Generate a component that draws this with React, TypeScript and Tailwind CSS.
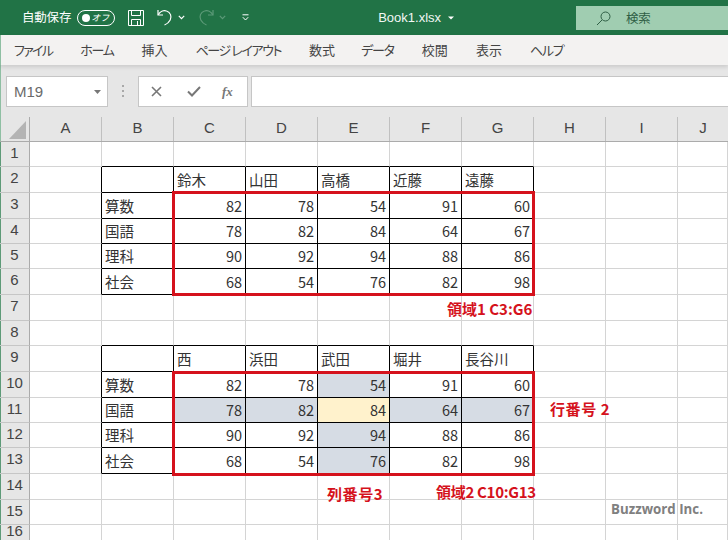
const jp = "font-['Noto_Sans_CJK_JP','Noto_Sans',sans-serif]";
const tabs = [
  { t: "ファイル", c: "tracking-[-1.7px]" },
  { t: "ホーム", c: "tracking-[-1.3px]" },
  { t: "挿入", c: "tracking-[0px]" },
  { t: "ページ レイアウト", c: "tracking-[-1.4px]" },
  { t: "数式", c: "tracking-[0px] mr-[-2px]" },
  { t: "データ", c: "tracking-[-1.2px]" },
  { t: "校閲", c: "tracking-[0px]" },
  { t: "表示", c: "tracking-[0px]" },
  { t: "ヘルプ", c: "tracking-[-1.2px]" },
];
const columns = ["A", "B", "C", "D", "E", "F", "G", "H", "I", "J"];

type Cell = string | number | null;
const rowsData: Record<number, Cell[]> = {
  2: [null, "鈴木", "山田", "高橋", "近藤", "遠藤"],
  3: ["算数", 82, 78, 54, 91, 60],
  4: ["国語", 78, 82, 84, 64, 67],
  5: ["理科", 90, 92, 94, 88, 86],
  6: ["社会", 68, 54, 76, 82, 98],
  9: [null, "西", "浜田", "武田", "堀井", "長谷川"],
  10: ["算数", 82, 78, 54, 91, 60],
  11: ["国語", 78, 82, 84, 64, 67],
  12: ["理科", 90, 92, 94, 88, 86],
  13: ["社会", 68, 54, 76, 82, 98],
};
const rowNumbers = Array.from({ length: 16 }, (_, i) => i + 1);

function inTable(r: number) {
  return (r >= 2 && r <= 6) || (r >= 9 && r <= 13);
}
function aboveTable(r: number) {
  return r === 1 || r === 8;
}

function fill(r: number, c: number) {
  if (r === 11 && c === 4) return "bg-[#fff2cc]";
  if (r === 11 && c >= 2 && c <= 6) return "bg-[#d6dce4]";
  if (c === 4 && r >= 10 && r <= 13) return "bg-[#d6dce4]";
  return "bg-white";
}

function SheetCell({ r, c }: { r: number; c: number }) {
  const value = c >= 1 && c <= 6 ? rowsData[r]?.[c - 1] ?? null : null;
  const rightBlack = inTable(r) && c >= 0 && c <= 6;
  const bottomBlack = (inTable(r) || aboveTable(r)) && c >= 1 && c <= 6;
  const isNum = typeof value === "number";
  return (
    <div
      className={`flex items-center overflow-hidden whitespace-nowrap border-r border-b text-[14.5px] text-[#333] ${fill(r, c)} ${
        rightBlack ? "border-r-black" : "border-r-[#d4d4d4]"
      } ${bottomBlack ? "border-b-black" : "border-b-[#d4d4d4]"} ${isNum ? "justify-end pr-[3px]" : "justify-start pl-[3px]"}`}
    >
      {value}
    </div>
  );
}

function Caret({ dim = false }: { dim?: boolean }) {
  return (
    <svg width="7" height="5" viewBox="0 0 7 5" fill="none" stroke={dim ? "#5c9a78" : "#ffffff"} strokeWidth="1.2">
      <path d="M0.8 0.8 L3.5 3.6 L6.2 0.8" />
    </svg>
  );
}

function TitleBar() {
  return (
    <div className={`flex h-[35px] shrink-0 items-center bg-[#217346] text-white ${jp}`}>
      <span className="ml-[22px] text-[12.5px] tracking-[-0.2px]">自動保存</span>
      <div className="ml-[6px] flex h-[16px] w-[38px] items-center justify-between rounded-full border border-white pl-[4px] pr-[5px]">
        <span className="h-[8px] w-[8px] rounded-full bg-white" />
        <span className="text-[9px] italic leading-none">オフ</span>
      </div>
      <svg className="ml-[13px]" width="16" height="16" viewBox="0 0 16 16" fill="none" stroke="#fff" strokeWidth="1">
        <path d="M0.5 0.5 H15.5 V15.5 H0.5 Z" />
        <path d="M3.5 0.5 V5.5 H12.5 V0.5" />
        <path d="M3.5 15.5 V9.5 H12.5 V15.5" />
        <path d="M9.5 11 V15" />
      </svg>
      <svg className="ml-[13px]" width="16" height="17" viewBox="0 0 16 17" fill="none" stroke="#fff" strokeWidth="1.2">
        <path d="M1 1 V6 H6" />
        <path d="M1.2 5.8 C3 2.5 6.5 1 9.5 2 C13.5 3.2 15 7.5 13.2 11 C12 13.3 10 15 7.5 16" />
      </svg>
      <span className="ml-[5px] flex">
        <Caret />
      </span>
      <svg className="ml-[13px]" width="16" height="17" viewBox="0 0 16 17" fill="none" stroke="#5c9a78" strokeWidth="1.2">
        <path d="M15 1 V6 H10" />
        <path d="M14.8 5.8 C13 2.5 9.5 1 6.5 2 C2.5 3.2 1 7.5 2.8 11 C4 13.3 6 15 8.5 16" />
      </svg>
      <span className="ml-[5px] flex">
        <Caret dim />
      </span>
      <svg className="ml-[16px]" width="7" height="7" viewBox="0 0 7 7" fill="none" stroke="#fff" strokeWidth="1">
        <path d="M0.5 0.8 H6.5" />
        <path d="M0.8 3.2 L3.5 6 L6.2 3.2" />
      </svg>
      <span className="ml-[129px] font-['Liberation_Sans',sans-serif] text-[13px] text-[#f2f7f4]">Book1.xlsx</span>
      <svg className="ml-[7px]" width="6" height="4" viewBox="0 0 6 4" fill="#fff">
        <path d="M0 0.5 H6 L3 3.5 Z" />
      </svg>
      <div className="ml-auto flex h-[24px] w-[152px] items-center self-start mt-[6px] bg-[#a0cdb1] pl-[20px] text-[#2f5f45]">
        <svg width="15" height="15" viewBox="0 0 15 15" fill="none" stroke="#2f5f45" strokeWidth="1">
          <circle cx="9.5" cy="5.5" r="4.5" />
          <path d="M6 9 L1 14" />
        </svg>
        <span className="ml-[15px] text-[12.5px] tracking-[-0.3px]">検索</span>
      </div>
    </div>
  );
}

function Ribbon() {
  return (
    <div
      className={`relative z-10 flex h-[30px] shrink-0 items-center gap-[28px] bg-[#f3f2f1] pl-[14px] text-[13px] text-[#444] shadow-[inset_1px_0_0_#8fbfa3,0_2px_4px_rgba(0,0,0,0.12)] ${jp} [font-feature-settings:'palt']`}
    >
      {tabs.map(({ t, c }) => (
        <span key={t} className={`whitespace-pre ${c}`}>
          {t}
        </span>
      ))}
    </div>
  );
}

function FormulaBar() {
  return (
    <div className="flex h-[52px] shrink-0 items-start bg-[#e6e6e6] pt-[11px] shadow-[inset_1px_0_0_#8fbfa3]">
      <div className="ml-[6px] flex h-[31px] w-[102px] items-center justify-between border border-[#c6c6c6] bg-white pl-[7px] pr-[6px] font-['Liberation_Sans',sans-serif] text-[15px] text-[#6a6a6a]">
        <span className="mt-[2px]">M19</span>
        <svg width="7" height="4" viewBox="0 0 7 4" fill="#777">
          <path d="M0 0 H7 L3.5 4 Z" />
        </svg>
      </div>
      <div className="ml-[14px] mt-[9px] flex h-[12px] w-[2px] flex-col justify-between">
        <span className="h-[2px] w-[2px] bg-[#a8a8a8]" />
        <span className="h-[2px] w-[2px] bg-[#a8a8a8]" />
        <span className="h-[2px] w-[2px] bg-[#a8a8a8]" />
      </div>
      <div className="ml-[14px] flex h-[31px] w-[110px] items-center border border-[#c6c6c6] bg-white pl-[12px]">
        <svg width="11" height="11" viewBox="0 0 11 11" fill="none" stroke="#777" strokeWidth="1.6">
          <path d="M1 1 L10 10 M10 1 L1 10" />
        </svg>
        <svg className="ml-[25px]" width="14" height="11" viewBox="0 0 14 11" fill="none" stroke="#777" strokeWidth="2">
          <path d="M1 5.5 L5 9.5 L13 1" />
        </svg>
        <span className="ml-[21px] font-['Liberation_Serif',serif] text-[13px] italic font-bold leading-none text-[#777]">fx</span>
      </div>
      <div className="ml-[3px] h-[31px] flex-1 border border-r-0 border-[#c6c6c6] bg-white" />
    </div>
  );
}

function ColumnHeader() {
  return (
    <div className="grid h-[25px] shrink-0 grid-cols-[30px_72px_72px_72px_72px_72px_72px_72px_72px_72px_1fr] border-b border-b-[#ababab] bg-[#e6e6e6] font-['Liberation_Sans',sans-serif] text-[15px] text-[#444] shadow-[inset_1px_0_0_#8fbfa3]">
      <div className="flex items-end justify-end border-r border-r-[#ababab] pb-[2px] pr-[3px]">
        <svg width="17" height="18" viewBox="0 0 17 18" fill="#b4b4b4">
          <path d="M17 0 V18 H0 Z" />
        </svg>
      </div>
      {columns.map((c, i) => (
        <div key={c} className={`flex items-center justify-center pb-[1px] ${i < 9 ? "border-r border-r-[#c0c0c0]" : ""}`}>
          {c}
        </div>
      ))}
    </div>
  );
}

function Sheet() {
  return (
    <div
      className={`relative grid grid-cols-[30px_72px_72px_72px_72px_72px_72px_72px_72px_72px_1fr] grid-rows-[25px_26px_26px_25px_25px_26px_26px_25px_26px_26px_25px_25px_26px_26px_25px_16px] ${jp}`}
    >
      {rowNumbers.map((r) => (
        <div key={r} className="contents">
          <div className="flex items-center justify-center border-r border-b border-r-[#ababab] border-b-[#c6c6c6] bg-[#e6e6e6] pb-[2px] font-['Liberation_Sans',sans-serif] text-[15px] text-[#444] shadow-[inset_1px_0_0_#5e9a78]">
            {r}
          </div>
          {columns.map((_, c) => (
            <SheetCell key={c} r={r} c={c} />
          ))}
        </div>
      ))}

      <div className="pointer-events-none absolute left-[172px] top-[49px] h-[105px] w-[363px] border-[3px] border-[#d5121c]" />
      <div className="pointer-events-none absolute left-[172px] top-[229px] h-[105px] w-[363px] border-[3px] border-[#d5121c]" />

      <span className="absolute left-[447px] top-[157px] text-[15px] font-bold leading-[20px] text-[#d5121c]">領域1 C3:G6</span>
      <span className="absolute left-[550px] top-[257px] text-[15px] font-bold leading-[20px] tracking-[0.6px] text-[#d5121c]">行番号 2</span>
      <span className="absolute left-[327px] top-[342px] text-[15px] font-bold leading-[20px] tracking-[0.6px] text-[#d5121c]">列番号3</span>
      <span className="absolute left-[436px] top-[340px] text-[15px] font-bold leading-[20px] tracking-[-0.3px] text-[#d5121c]">領域2 C10:G13</span>
      <span className="absolute left-[611px] top-[357px] font-['Open_Sans',sans-serif] text-[13.3px] font-bold leading-[20px] text-[#808080]">Buzzword Inc.</span>
    </div>
  );
}

export default function App() {
  return (
    <div className="flex h-[540px] w-[728px] flex-col overflow-hidden bg-white">
      <TitleBar />
      <Ribbon />
      <FormulaBar />
      <ColumnHeader />
      <Sheet />
    </div>
  );
}
